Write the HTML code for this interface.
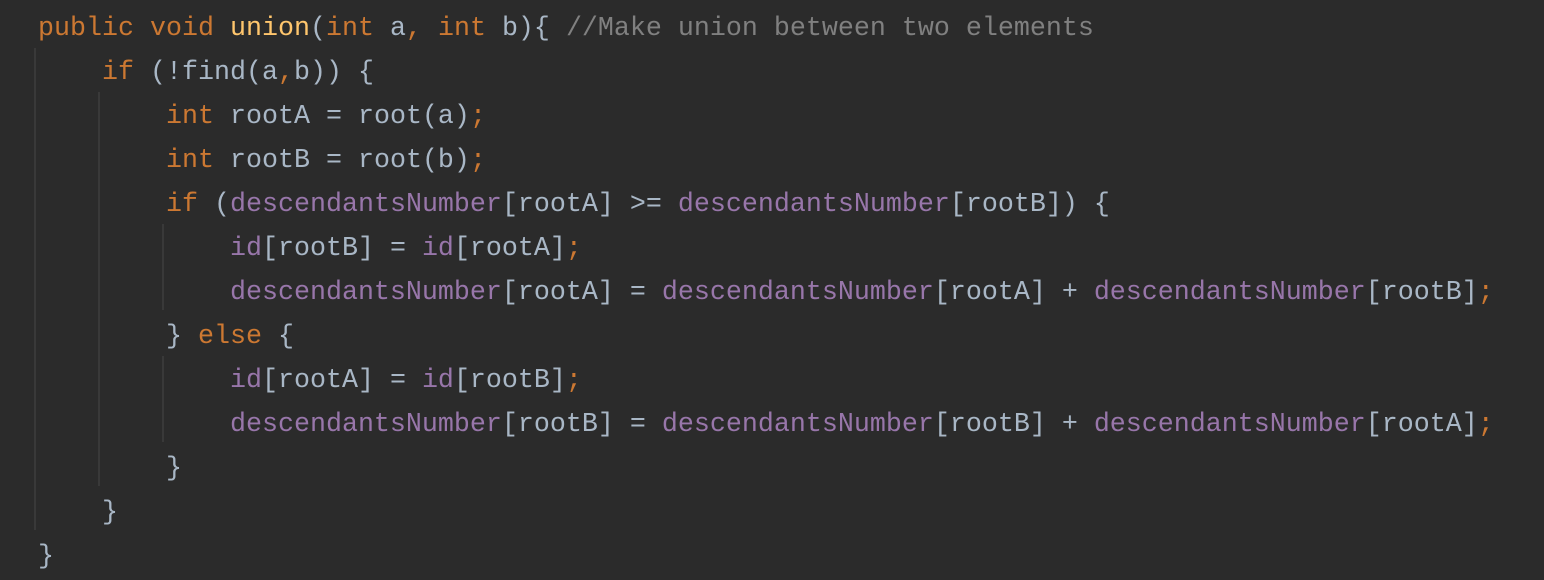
<!DOCTYPE html><html><head><style>
body{margin:0;width:1544px;height:580px;background:#2b2b2b;overflow:hidden;position:relative}
pre{margin:0;position:absolute;left:38px;top:7px;font-family:"Liberation Mono",monospace;font-size:26.67px;line-height:44px;color:#a9b7c6}
.k{color:#cc7832}.m{color:#ffc66d}.p{color:#9876aa}.c{color:#808080}
.g{position:absolute;width:2px;background:#393939}
</style></head><body>
<div class="g" style="left:34px;top:48px;height:482px"></div>
<div class="g" style="left:98px;top:92px;height:394px"></div>
<div class="g" style="left:162px;top:224px;height:86px"></div>
<div class="g" style="left:162px;top:356px;height:86px"></div>
<pre><span class="k">public void </span><span class="m">union</span>(<span class="k">int </span>a<span class="k">, int </span>b){ <span class="c">//Make union between two elements</span>
    <span class="k">if </span>(!find(a<span class="k">,</span>b)) {
        <span class="k">int </span>rootA = root(a)<span class="k">;</span>
        <span class="k">int </span>rootB = root(b)<span class="k">;</span>
        <span class="k">if </span>(<span class="p">descendantsNumber</span>[rootA] &gt;= <span class="p">descendantsNumber</span>[rootB]) {
            <span class="p">id</span>[rootB] = <span class="p">id</span>[rootA]<span class="k">;</span>
            <span class="p">descendantsNumber</span>[rootA] = <span class="p">descendantsNumber</span>[rootA] + <span class="p">descendantsNumber</span>[rootB]<span class="k">;</span>
        } <span class="k">else </span>{
            <span class="p">id</span>[rootA] = <span class="p">id</span>[rootB]<span class="k">;</span>
            <span class="p">descendantsNumber</span>[rootB] = <span class="p">descendantsNumber</span>[rootB] + <span class="p">descendantsNumber</span>[rootA]<span class="k">;</span>
        }
    }
}</pre>
</body></html>
